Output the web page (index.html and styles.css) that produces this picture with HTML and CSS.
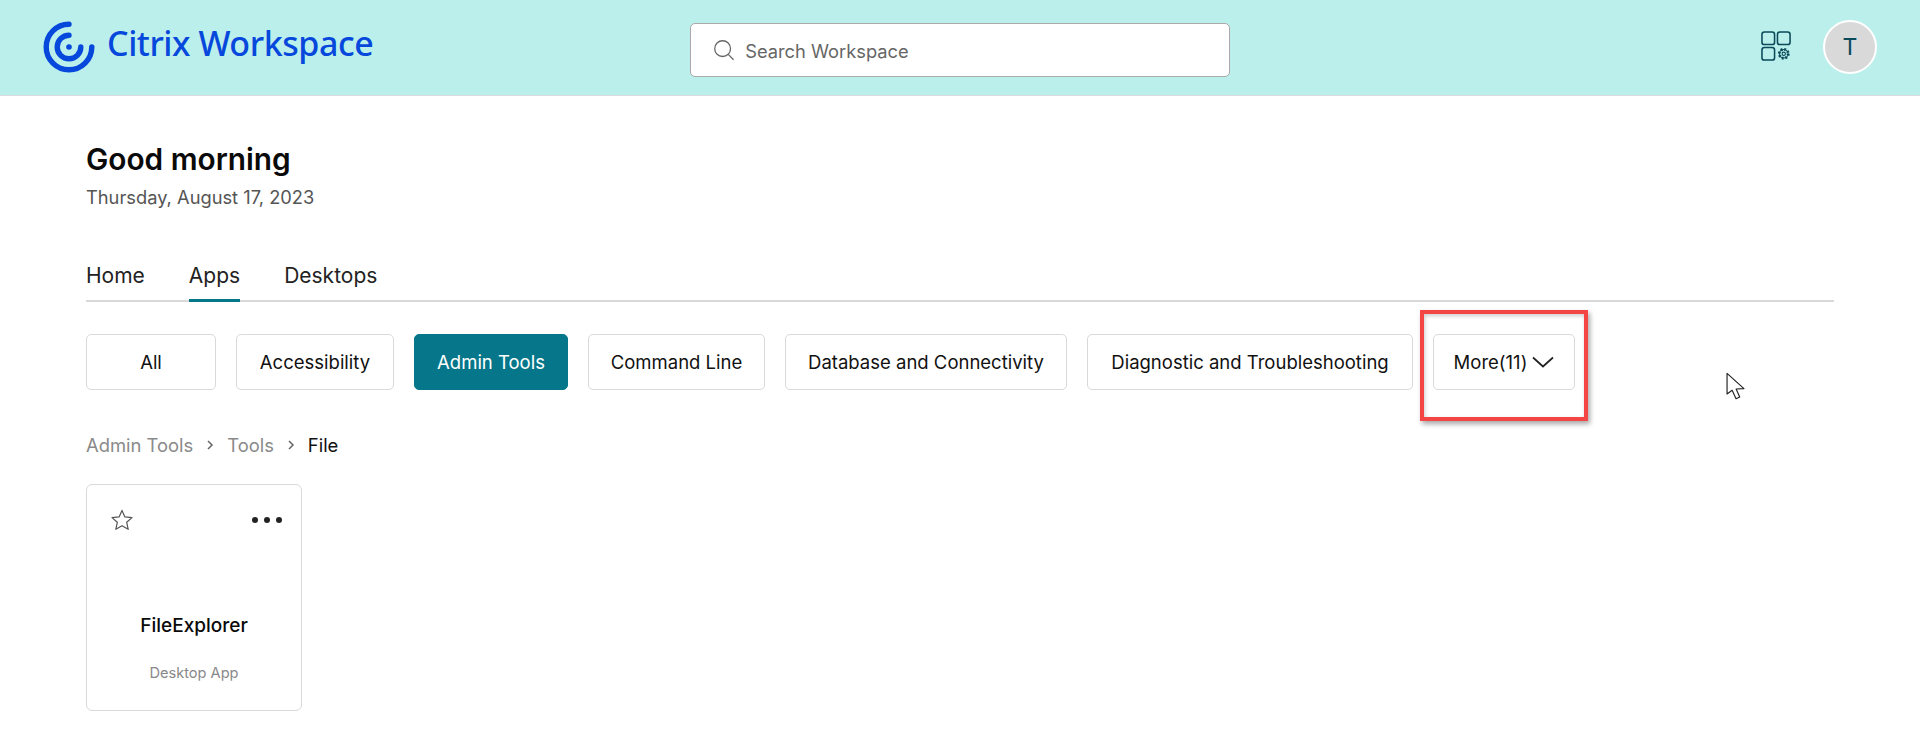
FILE: index.html
```html
<!DOCTYPE html>
<html lang="en">
<head>
  <meta charset="UTF-8" />
  <title>Citrix Workspace</title>
  <link rel="stylesheet" href="styles.css">
</head>
<body>
  <header class="topbar">
    <div class="brand">
      <svg class="brand-logo" viewBox="0 0 52 52" fill="none" stroke="#0648dc" stroke-linecap="round">
        <path d="M26 3.2A22.8 22.8 0 1 0 48.8 26" stroke-width="5.4"/>
        <path d="M26 14.2A11.8 11.8 0 1 0 37.8 26" stroke-width="5.4"/>
        <circle cx="26" cy="26" r="2.8" fill="#0648dc" stroke="none"/>
      </svg>
      <span class="brand-name">Citrix Workspace</span>
    </div>
    <div class="search">
      <svg class="search-icon" viewBox="0 0 24 24" fill="none" stroke="#666" stroke-width="1.4">
        <circle cx="10.5" cy="10.5" r="8.6"/>
        <path d="M16.6 16.8L22.4 22.6"/>
      </svg>
      <span class="search-text">Search Workspace</span>
    </div>
    <div class="top-actions">
      <svg class="apps-icon" viewBox="0 0 32 32" fill="none" stroke="#0b4a5a" stroke-width="1.6">
        <rect x="1" y="1" width="13" height="13" rx="2.5"/>
        <rect x="17" y="1" width="13" height="13" rx="2.5"/>
        <rect x="1" y="17" width="13" height="13" rx="2.5"/>
        <circle cx="23.5" cy="23.5" r="4.6" stroke-width="3" stroke-dasharray="1.8 1.8" fill="none"/>
        <circle cx="23.5" cy="23.5" r="4.4" stroke-width="1.1"/>
        <circle cx="23.5" cy="23.5" r="1.7" stroke-width="1.1"/>
      </svg>
      <div class="avatar">T</div>
    </div>
  </header>

  <main class="content">
    <h1 class="greeting">Good morning</h1>
    <p class="date">Thursday, August 17, 2023</p>

    <nav class="tabs">
      <a class="tab">Home</a>
      <a class="tab active">Apps</a>
      <a class="tab">Desktops</a>
    </nav>

    <div class="chips">
      <button class="chip">All</button>
      <button class="chip">Accessibility</button>
      <button class="chip selected">Admin Tools</button>
      <button class="chip">Command Line</button>
      <button class="chip">Database and Connectivity</button>
      <button class="chip">Diagnostic and Troubleshooting</button>
      <button class="chip chip-more">More(11)
        <svg class="chevron" viewBox="0 0 22 12" fill="none" stroke="#222" stroke-width="1.7"><path d="M1 1.5L11 10.5L21 1.5"/></svg>
      </button>
    </div>

    <div class="crumbs">
      <span>Admin Tools</span>
      <svg class="crumb-sep" viewBox="0 0 8 12" fill="none" stroke="#666" stroke-width="1.5"><path d="M2 2L6 6L2 10"/></svg>
      <span>Tools</span>
      <svg class="crumb-sep" viewBox="0 0 8 12" fill="none" stroke="#666" stroke-width="1.5"><path d="M2 2L6 6L2 10"/></svg>
      <span class="crumb-current">File</span>
    </div>

    <article class="card">
      <div class="card-top">
        <svg class="star" viewBox="0 0 22 22" fill="none" stroke="#555" stroke-width="1.2" stroke-linejoin="round">
          <path d="M11 1.4L13.9 7.9L21 8.6L15.7 13.3L17.2 20.3L11 16.7L4.8 20.3L6.3 13.3L1 8.6L8.1 7.9Z"/>
        </svg>
        <div class="dots"><i></i><i></i><i></i></div>
      </div>
      <div class="card-name">FileExplorer</div>
      <div class="card-type">Desktop App</div>
    </article>
  </main>

  <!-- annotations on top of the screenshot -->
  <div class="callout"></div>
  <svg class="cursor" viewBox="0 0 18 26" fill="#fff" stroke="#222" stroke-width="1.1" stroke-linejoin="round">
    <path d="M1 1L1 20.5L5.8 17L9.5 25L13 23.4L9.6 15.8L17 15.5Z"/>
  </svg>
</body>
</html>
```

FILE: styles.css
```css
* {
  margin: 0;
  padding: 0;
  box-sizing: border-box;
}

body {
  font-family: 'Inter', 'Liberation Sans', sans-serif;
  background: #fff;
  color: #111;
  position: relative;
  height: 748px;
  overflow: hidden;
}

.topbar {
  height: 96px;
  background: #bbefeb;
  border-bottom: 1px solid #d8dcdc;
  display: flex;
  align-items: center;
  padding: 0 43px 2px;
  position: relative;
}

.brand {
  display: flex;
  align-items: center;
  gap: 12px;
}

.brand-logo {
  width: 52px;
  height: 52px;
}

.brand-name {
  font-family: 'Noto Sans', sans-serif;
  font-size: 34px;
  font-weight: 500;
  letter-spacing: -0.45px;
  color: #0648dc;
  margin-top: -8px;
}

.search {
  margin-left: 317px;
  margin-top: 7px;
  width: 540px;
  height: 54px;
  background: #fff;
  border: 1px solid #aaa;
  border-radius: 5px;
  display: flex;
  align-items: center;
  padding-left: 22px;
  gap: 10px;
}

.search-icon {
  width: 22px;
  height: 22px;
}

.search-text {
  font-size: 18.3px;
  color: #666;
  margin-top: 1px;
}

.top-actions {
  margin-left: auto;
  display: flex;
  align-items: center;
  gap: 31px;
}

.apps-icon {
  width: 31px;
  height: 31px;
}

.avatar {
  width: 54px;
  height: 54px;
  border-radius: 50%;
  background: #d9d9d9;
  border: 2px solid #fff;
  color: #0b4a5a;
  font-size: 23px;
  display: flex;
  align-items: center;
  justify-content: center;
}

.content {
  padding: 46px 86px 0;
}

.greeting {
  font-size: 29.8px;
  font-weight: 600;
  line-height: 34px;
  color: #0a0a0a;
}

.date {
  font-size: 18.3px;
  line-height: 24px;
  margin-top: 9px;
  color: #555;
}

.tabs {
  display: flex;
  gap: 44px;
  margin-top: 43px;
  border-bottom: 2px solid #d9d9d9;
  width: 1748px;
  height: 50px;
}

.tab {
  font-size: 21px;
  line-height: 28px;
  color: #222;
  height: 50px;
  padding-top: 10px;
}

.tab.active {
  border-bottom: 3px solid #06778a;
}

.chips {
  display: grid;
  grid-template-columns: 130px 158px 154px 177px 282px 326px 142px;
  gap: 20px;
  margin-top: 32px;
}

.chip {
  height: 56px;
  font-family: inherit;
  font-size: 18.5px;
  color: #111;
  background: #fff;
  border: 1px solid #d9d9d9;
  border-radius: 5px;
  display: flex;
  align-items: center;
  justify-content: center;
}

.chip.selected {
  background: #06778a;
  border-color: #06778a;
  color: #fff;
}

.chip-more {
  gap: 5px;
}

.chevron {
  width: 22px;
  height: 12px;
}

.crumbs {
  display: flex;
  align-items: center;
  gap: 13px;
  margin-top: 43px;
  font-size: 18.4px;
  line-height: 24px;
  color: #8a8a8a;
}

.crumb-sep {
  width: 8px;
  height: 12px;
}

.crumb-current {
  color: #111;
}

.card {
  width: 216px;
  height: 227px;
  margin-top: 27px;
  border: 1px solid #d9d9d9;
  border-radius: 6px;
  padding: 24px 19px 0 24px;
  text-align: center;
}

.card-top {
  display: flex;
  justify-content: space-between;
  align-items: center;
}

.star {
  width: 22px;
  height: 22px;
}

.dots {
  display: flex;
  gap: 6px;
}

.dots i {
  width: 6px;
  height: 6px;
  border-radius: 50%;
  background: #222;
}

.card-name {
  margin: 83px 0 0 -24px;
  width: 214px;
  font-size: 19px;
  line-height: 24px;
  font-weight: 500;
  color: #0a0a0a;
}

.card-type {
  margin: 26px 0 0 -24px;
  width: 214px;
  font-size: 14.6px;
  line-height: 18px;
  color: #888;
}

.callout {
  position: absolute;
  left: 1420px;
  top: 310px;
  width: 168px;
  height: 111px;
  border: 4px solid #f44545;
  box-shadow: 2px 3px 5px rgba(0, 0, 0, 0.35), inset 1px 2px 4px rgba(0, 0, 0, 0.2);
}

.cursor {
  position: absolute;
  left: 1726px;
  top: 372px;
  width: 19px;
  height: 28px;
}
```
